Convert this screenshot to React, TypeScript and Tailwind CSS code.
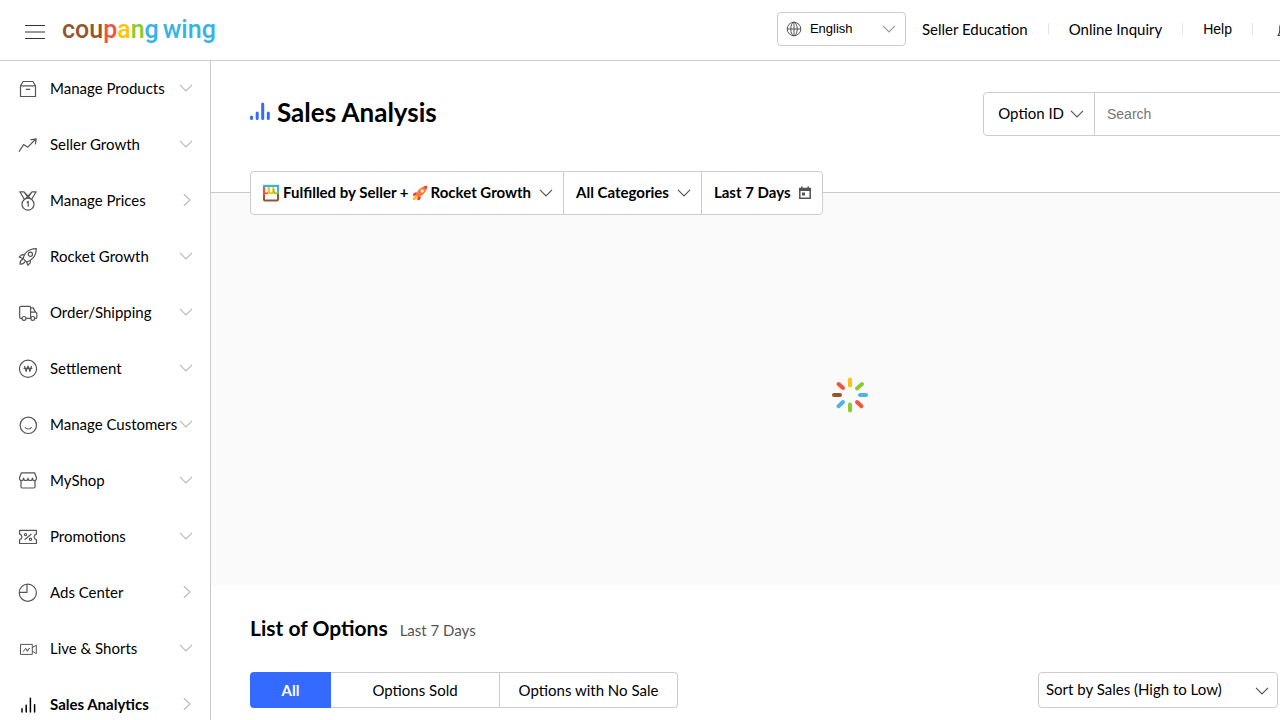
import type { ReactNode } from "react";

type ChevronProps = { className?: string };

function ChevronDown({ className = "" }: ChevronProps) {
  return (
    <svg viewBox="0 0 14 8" className={`h-2 w-3.5 shrink-0 ${className}`} fill="none" stroke="currentColor" strokeWidth="1.2" aria-hidden="true">
      <path d="M1 .8 7 7 13 .8" />
    </svg>
  );
}

function ChevronRight({ className = "" }: ChevronProps) {
  return (
    <svg viewBox="0 0 8 14" className={`h-3.5 w-2 shrink-0 ${className}`} fill="none" stroke="currentColor" strokeWidth="1.2" aria-hidden="true">
      <path d="M.8 1.2 7 7 .8 12.8" />
    </svg>
  );
}

function MenuIcon({ children }: { children: ReactNode }) {
  return (
    <svg viewBox="0 0 20 20" className="size-5 shrink-0 text-[#555]" fill="none" stroke="currentColor" strokeWidth="1.2" strokeLinejoin="round" aria-hidden="true">
      {children}
    </svg>
  );
}

type MenuEntry = { label: string; leaf?: boolean; active?: boolean; icon: ReactNode };

const menu: MenuEntry[] = [
  {
    label: "Manage Products",
    icon: <path d="M2.500 6.800 5 2.500h10l2.500 4.300v10.700h-15V6.800h15M7.800 10.300h4.400" />,
  },
  {
    label: "Seller Growth",
    icon: <path d="M1 16.800 5.600 9.600l4.200 2.600 8-8.200M12.400 4.800 18.200 3.800 17.400 9.400" />,
  },
  {
    label: "Manage Prices",
    leaf: true,
    icon: (
      <>
        <circle cx="10" cy="13.200" r="6" />
        <path d="M6.400 8.300 1.800.8H6l4 5.600L14 .8h4.200l-4.600 7.500M6 .8l6.500 6.800M14 .8 7.500 7.600M8.700 11.400l1.500-1v5.400" />
      </>
    ),
  },
  {
    label: "Rocket Growth",
    icon: (
      <>
        <path d="M5.200 11.600C6 7.200 9.500 1.800 18.300 1.700 18.200 9.600 13.200 13.900 8.600 15z" />
        <circle cx="12.400" cy="7.300" r="2.100" />
        <path d="M6.500 7.800 4 7.600 1.200 10l4 1.600M12.300 13.200v2.700l-2.500 2.300-1.200-3.400M4.700 12.400c-2 .7-2.800 2.400-2.600 4.700 2.300.2 4.100-.6 4.800-2.600" />
      </>
    ),
  },
  {
    label: "Order/Shipping",
    icon: (
      <>
        <path d="M4 15.400H2.800c-.7 0-1.100-.4-1.100-1.100V4.400c0-.7.4-1.100 1.100-1.100h8.700c.7 0 1.100.4 1.100 1.100v11M8 15.400h4.600M12.600 4.900h2.600l2.300 4.200 1.300.9v4.400c0 .6-.4 1-1 1h-1M12.600 9.100h4.900" />
        <circle cx="6" cy="15.400" r="1.900" />
        <circle cx="14.800" cy="15.400" r="1.900" />
      </>
    ),
  },
  {
    label: "Settlement",
    icon: (
      <>
        <circle cx="10" cy="9.800" r="8.600" />
        <path d="M6.400 7l1.700 5.400L10 7l1.900 5.400L13.600 7M5.600 9.400h8.800" />
      </>
    ),
  },
  {
    label: "Manage Customers",
    icon: (
      <>
        <circle cx="10.300" cy="10.300" r="8.200" />
        <path d="M7 12.200c1.500 2.400 5.100 2.400 6.600 0" />
      </>
    ),
  },
  {
    label: "MyShop",
    icon: (
      <>
        <path d="M3 9.200v6.600c0 .8.4 1.200 1.200 1.200h11.600c.8 0 1.200-.4 1.200-1.200V9.200" />
        <path d="M3.400 1.800h13.200l1.900 5c.2 1.700-.7 2.700-2 2.700-1.200 0-2-.7-2.100-2.300 0 1.500-.9 2.300-2.200 2.300S10 8.700 10 7.200c0 1.500-.9 2.300-2.200 2.300S5.600 8.700 5.600 7.200C5.500 8.800 4.700 9.500 3.500 9.500c-1.300 0-2.200-1-2-2.700z" />
      </>
    ),
  },
  {
    label: "Promotions",
    icon: (
      <>
        <path d="M1.600 3.300h16.800v3.900c-1.400.4-2.300 1.400-2.300 2.700s.9 2.300 2.300 2.700v3.900H1.600v-3.900c1.400-.4 2.300-1.400 2.300-2.700s-.9-2.300-2.300-2.700z" />
        <path d="M6.600 12.800 13.400 7" />
        <circle cx="7.500" cy="7.600" r="1.100" />
        <circle cx="12.500" cy="12.200" r="1.100" />
      </>
    ),
  },
  {
    label: "Ads Center",
    leaf: true,
    icon: (
      <>
        <path d="M9 1.200V9.400H1.300" />
        <circle cx="9.800" cy="9.700" r="8.600" />
      </>
    ),
  },
  {
    label: "Live & Shorts",
    icon: (
      <path strokeWidth="1" d="M2.500 5.400h11.800v10H2.500zM14.300 8.600l4-2.400v8.400l-4-2.400M5.200 12.800l2.500-3.600 1.300 2.600 2.500-2.600M9.200 12.600l2.300-3.400" />
    ),
  },
  {
    label: "Sales Analytics",
    leaf: true,
    active: true,
    icon: <path className="text-black" stroke="currentColor" strokeWidth="1.500" strokeLinecap="round" d="M4 13.800V17M8.200 10.200V17M12.400 3.200V17M16.600 9.700V17" />,
  },
];

function Sidebar() {
  return (
    <nav aria-label="Main menu" className="w-[211px] shrink-0 border-r border-[#ccc]">
      <ul>
        {menu.map((m) => (
          <li key={m.label}>
            <a href="#" className="flex h-14 items-center pr-[17px] pl-[18px]">
              <MenuIcon>{m.icon}</MenuIcon>
              <span className="ml-3 flex grow items-center justify-between pb-0.5">
                <span className={`whitespace-nowrap ${m.active ? "font-bold" : ""}`}>{m.label}</span>
                {m.leaf ? <ChevronRight className="mr-0.5 text-[#bbb]" /> : <ChevronDown className="text-[#bbb]" />}
              </span>
            </a>
          </li>
        ))}
      </ul>
    </nav>
  );
}

function Header() {
  return (
    <header className="flex h-[61px] items-center border-b border-[#ccc] pb-0.5 pl-[25px]">
      <button type="button" aria-label="Toggle menu" className="mt-1.5">
        <svg viewBox="0 0 20 14" className="h-3.5 w-5" stroke="#333" aria-hidden="true">
          <path d="M0 .5h20M0 7h20M0 13.500h20" />
        </svg>
      </button>
      <a href="#" aria-label="coupang wing" className="mt-0.5 ml-[17px] flex gap-1 font-[Roboto,sans-serif] text-[25px] leading-8 font-medium">
        <span className="text-[#36b4e5]">
          <span className="text-[#94572c]">cou</span>
          <span className="text-[#f5533d]">p</span>
          <span className="text-[#fdc40c]">a</span>
          <span className="text-[#8bcb2e]">n</span>g
        </span>
        <span className="text-[#36b4e5]">wing</span>
      </a>
      <div className="-mr-4 ml-auto flex shrink-0 items-center">
        <div className="relative mr-4">
          <svg viewBox="0 0 16 16" className="pointer-events-none absolute top-[9px] left-[9px] size-4" fill="none" stroke="#555" strokeWidth="1" aria-hidden="true">
            <circle cx="8" cy="8" r="6.800" />
            <ellipse cx="8" cy="8" rx="3.200" ry="6.800" />
            <path d="M1.200 8h13.600M8 1.200v13.600" />
          </svg>
          <select aria-label="Language" className="h-[34px] w-[129px] appearance-none rounded border border-[#ccc] bg-white pl-8 font-['Liberation_Sans',sans-serif] text-[13px]">
            <option>English</option>
          </select>
          <ChevronDown className="pointer-events-none absolute top-[13px] right-[10px] text-[#999]" />
        </div>
        <a href="#">Seller Education</a>
        <span className="mx-5 h-3 w-px bg-[#e5e5e5]" />
        <a href="#">Online Inquiry</a>
        <span className="mx-5 h-3 w-px bg-[#e5e5e5]" />
        <a href="#" className="font-['Liberation_Sans',sans-serif] text-sm">Help</a>
        <span className="mx-5 h-3 w-px bg-[#e5e5e5]" />
        <button type="button" aria-label="Notifications" className="ml-[3px]">
          <svg viewBox="0 0 20 20" className="size-5" fill="none" stroke="#444" strokeWidth="1.200" aria-hidden="true">
            <path d="M1.500 16.500h17M2 16.500c1.200-1.500 1.800-3 1.800-5V9C3.800 5 6.300 2.500 10 2.500S16.200 5 16.200 9v2.500c0 2 .6 3.500 1.800 5M8 18.500h4" />
          </svg>
        </button>
      </div>
    </header>
  );
}

function StoreIcon() {
  return (
    <svg viewBox="0 0 18 18" className="size-[18px]" fill="none" aria-hidden="true">
      <path d="M2 10v5.600c0 .6.300.9.900.9h12.200c.6 0 .9-.3.900-.9V10" stroke="#94572c" strokeWidth="2" />
      <path d="M2 11V3" stroke="#f5533d" strokeWidth="2.200" />
      <path d="M1 1.900h16" stroke="#36b4e5" strokeWidth="2.200" />
      <path d="M16 3v7" stroke="#36b4e5" strokeWidth="2" />
      <path d="M2 8.500c2.800 2 4.500.5 4.700-1.500V4" stroke="#f5533d" strokeWidth="1.600" />
      <path d="M6.700 3v4c0 3 4.600 3 4.600 0V3" stroke="#fdc40c" strokeWidth="2" />
      <path d="M11.800 5v2.500c0 2.500 4.200 2.500 4.200 0" stroke="#8bcb2e" strokeWidth="1.800" />
    </svg>
  );
}

function RocketIcon() {
  return (
    <svg viewBox="0 0 16 16" className="size-4" aria-hidden="true">
      <path d="M4.500 7 1.500 8.200.8 11l4-.8zM9 11.500 8 14.800l-2.900.4.900-4z" fill="#f5333f" />
      <path d="M3.800 10.500C4.800 5.500 9 1.300 15.300.8 15 7 10.500 11.300 5.500 12.300z" fill="#ff7a3d" />
      <path d="M15.300.8 11.500 1.700 14.400 4.600z" fill="#f5333f" />
      <path d="M3.500 10.500c-1.800.8-2.600 2.500-2.700 4.800 2.300-.1 4-.9 4.800-2.700z" fill="#ffbd2e" />
      <circle cx="10.200" cy="5.900" r="1.600" fill="#fff2d8" />
    </svg>
  );
}

function Spinner() {
  return (
    <svg viewBox="-18 -18 36 36" className="size-9" strokeWidth="4" strokeLinecap="round" role="img" aria-label="Loading">
      <path d="M0-15.500V-9.500" stroke="#fdc40c" />
      <path d="M7-6.500 12-11M0 9.500v6" stroke="#8bcb2e" />
      <path d="M10 0h6M-7 7-11.500 11.200" stroke="#4fb3e8" />
      <path d="M7 7l4.500 4.200M-7-7-11.500-11" stroke="#f5533d" />
      <path d="M-10 0h-6" stroke="#94572c" />
    </svg>
  );
}

export default function App() {
  return (
    <div className="min-h-screen overflow-x-hidden bg-white font-[Lato,sans-serif] text-[15px] leading-5 text-black">
      <Header />
      <div className="flex">
        <Sidebar />
        <main className="min-w-0 grow">
          <div className="flex h-[132px] items-start border-b border-[#ccc] pt-[31px] pl-[39px]">
            <svg viewBox="0 0 20 20" className="mt-[9px] size-5" stroke="#346aff" strokeWidth="3" strokeLinecap="round" aria-hidden="true">
              <path d="M1.500 16v1.500M7.200 12v5.500M12.700 3v14.500M18.300 12v5.500" />
            </svg>
            <h1 className="ml-[7px] text-[26px] leading-10 font-bold">Sales Analysis</h1>
            <form role="search" className="-mr-[77px] ml-auto flex h-11 shrink-0 rounded border border-[#ccc]">
              <button type="button" className="flex items-center gap-1.5 border-r border-[#ccc] pr-2.5 pl-3.5">
                <span className="pb-0.5">Option ID</span>
                <ChevronDown className="text-[#555]" />
              </button>
              <input aria-label="Search" placeholder="Search" className="w-[261px] px-3 font-['Liberation_Sans',sans-serif] text-sm placeholder:text-[#757575]" />
            </form>
          </div>
          <section aria-label="Sales summary" className="flex h-[392px] flex-col bg-[#fafafa] pl-[39px]">
            <div className="relative -mt-[22px] flex h-11 shrink-0 self-start divide-x divide-[#ccc] rounded border border-[#ccc] bg-white font-bold">
              <button type="button" className="flex items-center pr-2.5 pl-[11px] whitespace-nowrap">
                <StoreIcon />
                <span className="ml-[3px] pb-0.5">Fulfilled by Seller +</span>
                <span className="mx-[3px]"><RocketIcon /></span>
                <span className="mr-2 pb-0.5">Rocket Growth</span>
                <ChevronDown className="text-[#555]" />
              </button>
              <button type="button" className="flex items-center gap-2 pr-2.5 pl-3 whitespace-nowrap">
                <span className="pb-0.5">All Categories</span>
                <ChevronDown className="text-[#555]" />
              </button>
              <button type="button" className="flex items-center gap-2 pr-2.5 pl-3 whitespace-nowrap">
                <span className="pb-0.5">Last 7 Days</span>
                <svg viewBox="0 0 14 14" className="size-3.5" fill="none" aria-hidden="true">
                  <path d="M1.800 2.500h10.400v9.700H1.800z" stroke="#555" strokeWidth="1.500" />
                  <path d="M1 2h12v3H1zM3 .5h1.600v2H3zM9.400.5H11v2H9.400zM4 6.500h3v3H4z" fill="#555" />
                </svg>
              </button>
            </div>
            <div className="flex grow items-center justify-center pb-2.5 pl-[170px]">
              <Spinner />
            </div>
          </section>
          <section aria-label="Options" className="pt-[29px] pr-0.5 pb-3 pl-[39px]">
            <div className="flex items-baseline gap-3">
              <h2 className="text-[21px] leading-7 font-bold">List of Options</h2>
              <span className="text-[#555]">Last 7 Days</span>
            </div>
            <div className="mt-[30px] flex items-center justify-between">
              <div className="flex h-9">
                <button type="button" className="w-[81px] rounded-l bg-[#346aff] font-bold text-white">All</button>
                <button type="button" className="w-[169px] border-y border-r border-[#ccc]">Options Sold</button>
                <button type="button" className="w-[178px] rounded-r border-y border-r border-[#ccc]">Options with No Sale</button>
              </div>
              <div className="relative">
                <select aria-label="Sort" className="h-9 w-60 appearance-none rounded border border-[#ccc] bg-white pb-0.5 pl-[7px]">
                  <option>Sort by Sales (High to Low)</option>
                </select>
                <ChevronDown className="pointer-events-none absolute top-[15px] right-[9px] text-[#555]" />
              </div>
            </div>
          </section>
        </main>
      </div>
    </div>
  );
}
